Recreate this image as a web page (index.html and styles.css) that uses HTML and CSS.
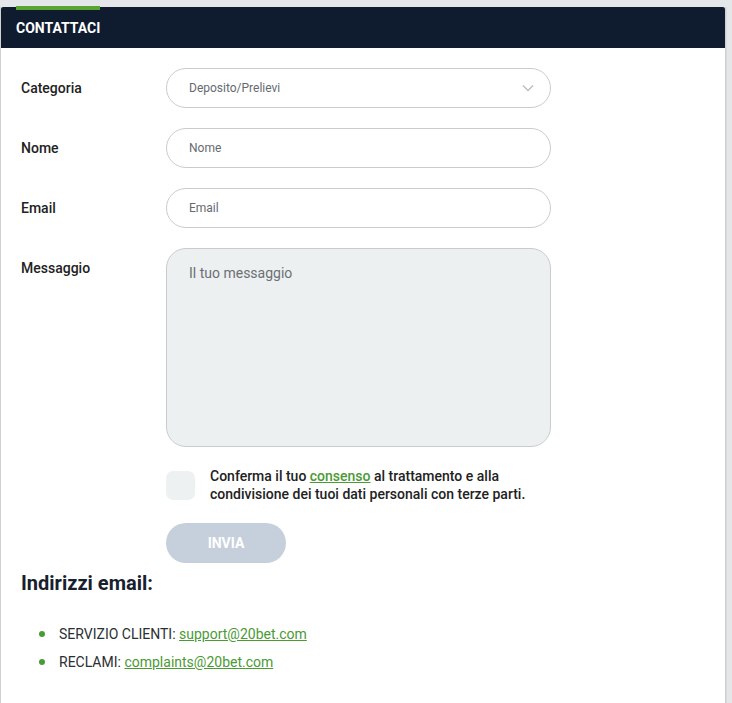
FILE: index.html
```html
<!DOCTYPE html>
<html lang="it">
<head>
<meta charset="utf-8">
<title>Contattaci</title>
<link rel="stylesheet" href="styles.css">
</head>
<body>
<div class="card">
  <div class="header"><span class="tab">CONTATTACI</span></div>
  <form class="form">
    <label class="label">Categoria</label>
    <div class="field select">
      <span>Deposito/Prelievi</span>
      <svg class="chev" width="12" height="8" viewBox="0 0 12 8"><path d="M1 1.5 L6 6.5 L11 1.5" fill="none" stroke="#b8bcc0" stroke-width="1.3"/></svg>
    </div>
    <label class="label">Nome</label>
    <div class="field"><span>Nome</span></div>
    <label class="label">Email</label>
    <div class="field"><span>Email</span></div>
    <label class="label">Messaggio</label>
    <div class="textarea"><span>Il tuo messaggio</span></div>
    <div></div>
    <div class="consent">
      <span class="box"></span>
      <p>Conferma il tuo <a href="#">consenso</a> al trattamento e alla condivisione dei tuoi dati personali con terze parti.</p>
    </div>
    <div></div>
    <div><button type="button" class="btn">INVIA</button></div>
  </form>
  <h2 class="title">Indirizzi email:</h2>
  <ul class="list">
    <li>SERVIZIO CLIENTI: <a href="#">support@20bet.com</a></li>
    <li>RECLAMI: <a href="#">complaints@20bet.com</a></li>
  </ul>
</div>
</body>
</html>
```
FILE: styles.css
```css
html, body {
  margin: 0;
  padding: 0;
}
body {
  background: #e4e7e9;
  font-family: Roboto, "Liberation Sans", Arial, sans-serif;
  height: 703px;
  overflow: hidden;
}
.card {
  margin: 7px 0 0 0;
  width: 724px;
  height: 696px;
  background: #fff;
  border-left: 1px solid #cfd1d3;
  box-shadow: 1px 0 0 #cfcfcf, 2px 0 0 #dcdcdc;
}
.header {
  height: 41px;
  background: #0f1c2f;
  padding-left: 15px;
  border-radius: 2px 2px 0 0;
}
.tab {
  display: inline-block;
  border-top: 4px solid #5aa532;
  margin-top: -1px;
  height: 37px;
  line-height: 37px;
  color: #fff;
  font-weight: 700;
  font-size: 14px;
}
.form {
  display: grid;
  grid-template-columns: 145px 385px;
  row-gap: 20px;
  padding: 20px 0 0 20px;
}
.label {
  line-height: 40px;
  font-size: 14px;
  font-weight: 500;
  color: #222;
}
.field {
  height: 38px;
  border: 1px solid #c9cccf;
  border-radius: 20px;
  display: flex;
  align-items: center;
  padding: 0 15px 0 22px;
  font-size: 12px;
  color: #666a70;
}
.select {
  justify-content: space-between;
}
.chev {
  margin-right: 1px;
}
.textarea {
  border: 1px solid #c9cccf;
  border-radius: 20px;
  background: #edf0f1;
  padding: 16px 22px 0;
  box-sizing: border-box;
  height: 199px;
  font-size: 14px;
  color: #6b6f74;
}
.consent {
  display: flex;
  align-items: center;
  gap: 15px;
}
.box {
  width: 29px;
  height: 29px;
  border-radius: 7px;
  background: #edf1f1;
  flex: none;
}
.consent p {
  margin: 0;
  font-size: 14px;
  line-height: 18px;
  font-weight: 500;
  color: #222;
}
.consent a, .list a {
  color: #4b9a35;
  text-decoration: underline;
}
.btn {
  width: 120px;
  height: 40px;
  border: 0;
  border-radius: 20px;
  background: #c6d0dc;
  color: #fff;
  font-family: inherit;
  font-weight: 700;
  font-size: 14px;
  padding: 0;
}
.title {
  margin: 8px 0 0 20px;
  font-size: 20px;
  font-weight: 700;
  color: #17202e;
}
.list {
  margin: 25px 0 0 0;
  padding: 0 0 0 38px;
  list-style: none;
}
.list li {
  position: relative;
  padding-left: 20px;
  font-size: 14px;
  line-height: 28px;
  color: #2b2f33;
}
.list li::before {
  content: "";
  position: absolute;
  left: 0;
  top: 11px;
  width: 6px;
  height: 6px;
  border-radius: 50%;
  background: #4b9a35;
}
```
